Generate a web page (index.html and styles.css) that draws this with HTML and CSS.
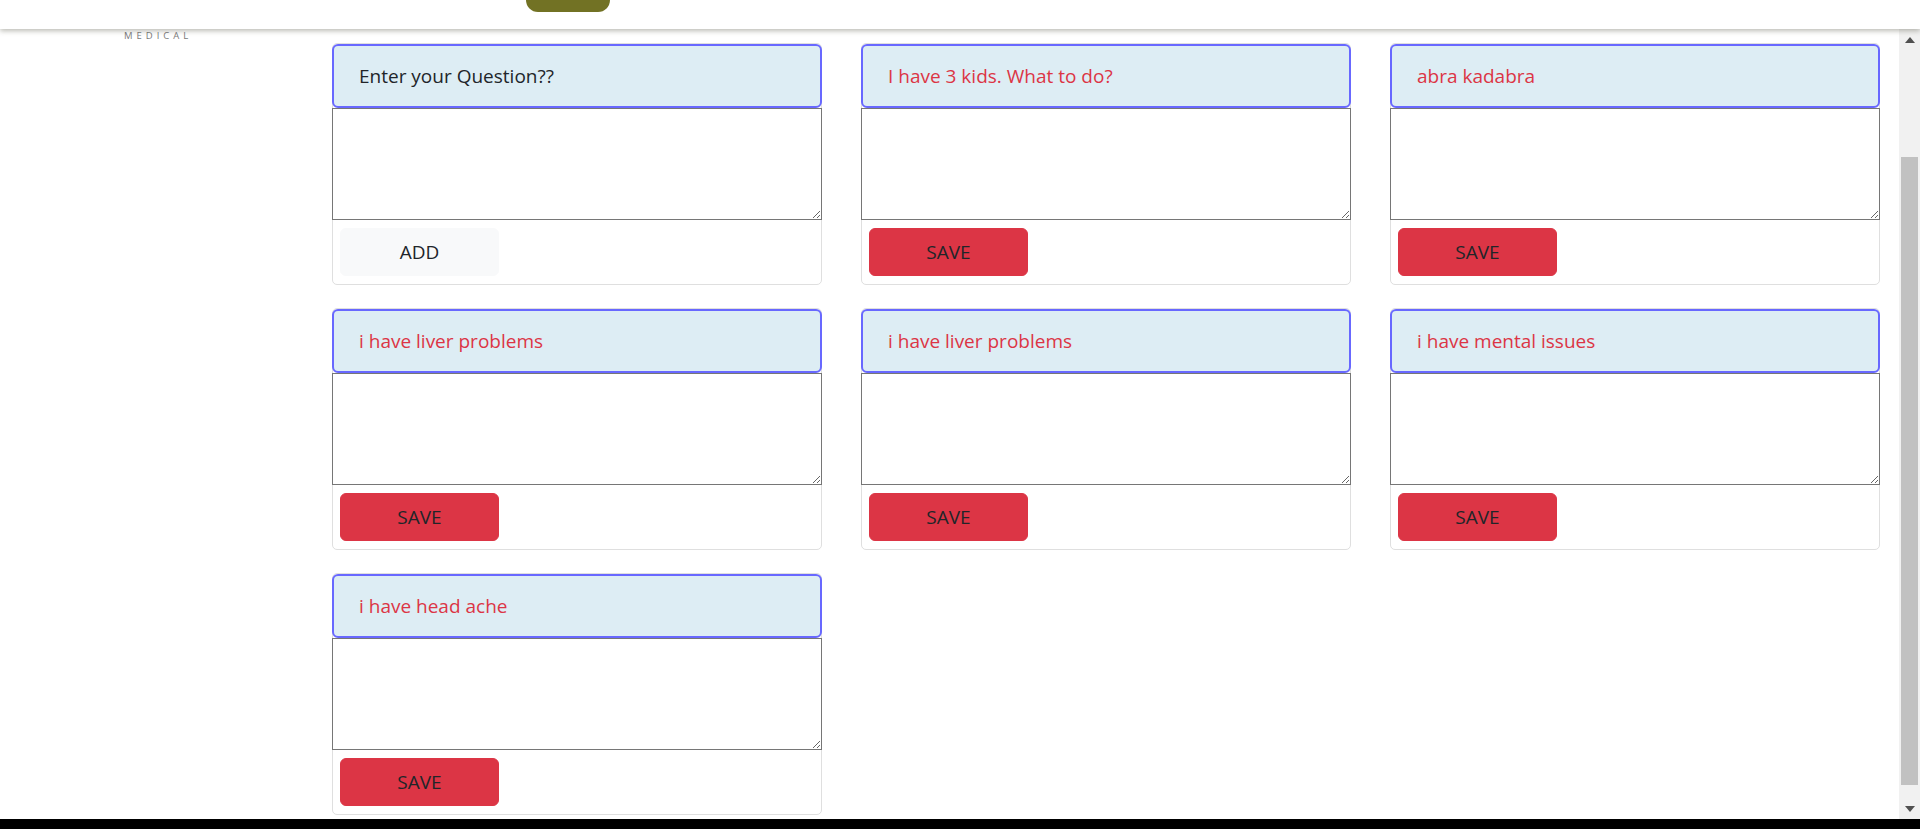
FILE: index.html
```html
<!DOCTYPE html>
<html lang="en">
<head>
<meta charset="utf-8">
<title>Medical Q&amp;A</title>
<link rel="stylesheet" href="styles.css">
</head>
<body>
<div class="app">
  <header class="topbar">
    <div class="olive-btn"></div>
  </header>
  <div class="viewport">
    <main class="content">
      <div class="brand">MEDICAL</div>
      <div class="grid">
        <div class="card">
          <input class="q-input q-new" type="text" value="Enter your Question??">
          <textarea class="answer"></textarea>
          <div class="card-body"><button class="btn btn-light">ADD</button></div>
        </div>
        <div class="card">
          <input class="q-input" type="text" value="I have 3 kids. What to do?">
          <textarea class="answer"></textarea>
          <div class="card-body"><button class="btn btn-danger">SAVE</button></div>
        </div>
        <div class="card">
          <input class="q-input" type="text" value="abra kadabra">
          <textarea class="answer"></textarea>
          <div class="card-body"><button class="btn btn-danger">SAVE</button></div>
        </div>
        <div class="card">
          <input class="q-input" type="text" value="i have liver problems">
          <textarea class="answer"></textarea>
          <div class="card-body"><button class="btn btn-danger">SAVE</button></div>
        </div>
        <div class="card">
          <input class="q-input" type="text" value="i have liver problems">
          <textarea class="answer"></textarea>
          <div class="card-body"><button class="btn btn-danger">SAVE</button></div>
        </div>
        <div class="card">
          <input class="q-input" type="text" value="i have mental issues">
          <textarea class="answer"></textarea>
          <div class="card-body"><button class="btn btn-danger">SAVE</button></div>
        </div>
        <div class="card">
          <input class="q-input" type="text" value="i have head ache">
          <textarea class="answer"></textarea>
          <div class="card-body"><button class="btn btn-danger">SAVE</button></div>
        </div>
      </div>
    </main>
    <div class="vscroll">
      <div class="sb-btn">
        <svg width="10" height="6" viewBox="0 0 10 6"><polygon points="0,6 10,6 5,0" fill="#505050"/></svg>
      </div>
      <div class="sb-track"><div class="sb-thumb"></div></div>
      <div class="sb-btn">
        <svg width="10" height="6" viewBox="0 0 10 6"><polygon points="0,0 10,0 5,6" fill="#505050"/></svg>
      </div>
    </div>
  </div>
  <div class="bottom-bar"></div>
</div>
</body>
</html>
```

FILE: styles.css
```css
* { box-sizing: border-box; }

html, body {
  margin: 0;
  padding: 0;
  height: 100%;
  overflow: hidden;
  background: #fff;
  font-family: "Segoe UI", "Open Sans", "Noto Sans", sans-serif;
  color: #212529;
}

.app {
  display: flex;
  flex-direction: column;
  height: 100vh;
}

.topbar {
  flex: 0 0 29px;
  height: 29px;
  background: #fff;
  display: flex;
  align-items: flex-start;
  padding-left: 526px;
  position: relative;
  z-index: 2;
  box-shadow: 0 2px 5px rgba(70, 70, 50, 0.36);
}

.olive-btn {
  width: 84px;
  height: 12px;
  background: #727224;
  border-radius: 0 0 14px 14px;
}

.viewport {
  flex: 1 1 auto;
  display: flex;
  min-height: 0;
}

.content {
  flex: 1 1 auto;
  overflow: hidden;
}

.brand {
  height: 14px;
  padding: 2px 0 0 124px;
  font-family: "Open Sans", "Noto Sans", sans-serif;
  font-size: 9.5px;
  line-height: 10px;
  letter-spacing: 4px;
  color: #7a7a7a;
}

.grid {
  margin-left: 332px;
  display: grid;
  grid-template-columns: repeat(3, 490px);
  column-gap: 39px;
  row-gap: 23.5px;
  align-items: start;
}

.card {
  border: 1px solid #dfdfdf;
  border-radius: 5px;
  background: #fff;
}

.q-input {
  display: block;
  width: calc(100% + 2px);
  margin: 0 -1px;
  height: 64px;
  padding: 0 24px 0 25px;
  border: 2px solid #6868ff;
  border-radius: 6px;
  background: #ddedf4;
  color: #dc3545;
  font-family: "Segoe UI", "Open Sans", "Noto Sans", sans-serif;
  font-size: 19px;
  outline: none;
}

.q-new { color: #212529; }

.answer {
  display: block;
  width: calc(100% + 2px);
  margin: 0 -1px;
  height: 112px;
  border: 1px solid #767676;
  border-radius: 0;
  padding: 2px;
  font-family: inherit;
  font-size: 16px;
  background: #fff;
}

.card-body {
  padding: 8px 7px 8px 7px;
  display: flex;
}

.btn {
  width: 159px;
  height: 47.5px;
  border: 1px solid transparent;
  border-radius: 6px;
  font-family: "Segoe UI", "Open Sans", "Noto Sans", sans-serif;
  font-size: 19px;
  line-height: 28px;
  color: #212529;
  padding: 0 15px;
  cursor: pointer;
}

.btn-light {
  background: #f8f9fa;
  border-color: #f8f9fa;
}

.btn-danger {
  background: #dc3545;
  border-color: #dc3545;
}

.vscroll {
  flex: 0 0 21px;
  width: 21px;
  background: #f1f1f1;
  display: flex;
  flex-direction: column;
}

.sb-btn {
  flex: 0 0 21px;
  display: flex;
  align-items: center;
  justify-content: center;
}

.sb-track {
  flex: 1 1 auto;
  display: flex;
  flex-direction: column;
}

.sb-thumb {
  margin: 107px 2px 0 2px;
  height: 628px;
  background: #c1c1c1;
}

.bottom-bar {
  flex: 0 0 10px;
  height: 10px;
  background: #000;
}
```
